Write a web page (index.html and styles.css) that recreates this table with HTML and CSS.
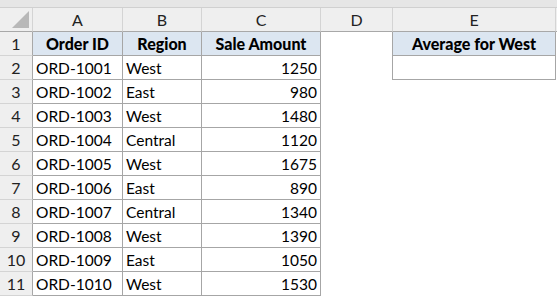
FILE: index.html
```html
<!DOCTYPE html>
<html>
<head>
<meta charset="utf-8">
<link rel="stylesheet" href="styles.css">
</head>
<body>
<div class="sheet">
  <div class="strip"></div>
  <div class="grid">
    <div class="ch corner"><span class="tri"></span></div>
    <div class="ch">A</div>
    <div class="ch">B</div>
    <div class="ch">C</div>
    <div class="ch">D</div>
    <div class="ch">E</div>
    <div class="ch fill"></div>

    <div class="rh">1</div>
    <div class="c hd">Order ID</div>
    <div class="c hd">Region</div>
    <div class="c hd">Sale Amount</div>
    <div class="e"></div>
    <div class="c hd el">Average for West</div>
    <div class="e"></div>

    <div class="rh">2</div>
    <div class="c">ORD-1001</div><div class="c">West</div><div class="c n">1250</div>
    <div class="e"></div><div class="c el"></div><div class="e"></div>

    <div class="rh">3</div>
    <div class="c">ORD-1002</div><div class="c">East</div><div class="c n">980</div>
    <div class="e"></div><div class="e"></div><div class="e"></div>

    <div class="rh">4</div>
    <div class="c">ORD-1003</div><div class="c">West</div><div class="c n">1480</div>
    <div class="e"></div><div class="e"></div><div class="e"></div>

    <div class="rh">5</div>
    <div class="c">ORD-1004</div><div class="c">Central</div><div class="c n">1120</div>
    <div class="e"></div><div class="e"></div><div class="e"></div>

    <div class="rh">6</div>
    <div class="c">ORD-1005</div><div class="c">West</div><div class="c n">1675</div>
    <div class="e"></div><div class="e"></div><div class="e"></div>

    <div class="rh">7</div>
    <div class="c">ORD-1006</div><div class="c">East</div><div class="c n">890</div>
    <div class="e"></div><div class="e"></div><div class="e"></div>

    <div class="rh">8</div>
    <div class="c">ORD-1007</div><div class="c">Central</div><div class="c n">1340</div>
    <div class="e"></div><div class="e"></div><div class="e"></div>

    <div class="rh">9</div>
    <div class="c">ORD-1008</div><div class="c">West</div><div class="c n">1390</div>
    <div class="e"></div><div class="e"></div><div class="e"></div>

    <div class="rh">10</div>
    <div class="c">ORD-1009</div><div class="c">East</div><div class="c n">1050</div>
    <div class="e"></div><div class="e"></div><div class="e"></div>

    <div class="rh">11</div>
    <div class="c">ORD-1010</div><div class="c">West</div><div class="c n">1530</div>
    <div class="e"></div><div class="e"></div><div class="e"></div>
  </div>
</div>
</body>
</html>
```

FILE: styles.css
```css
* { box-sizing: border-box; }
html, body { margin: 0; padding: 0; background: #ffffff; }
body {
  font-family: Lato, "Open Sans", sans-serif;
  font-size: 15.5px;
  color: #000;
}
.sheet { width: 557px; height: 297px; overflow: hidden; }
.strip {
  height: 8px;
  background: #e6e6e6;
  border-bottom: 1px solid #d0d0d0;
}
.grid {
  display: grid;
  grid-template-columns: 33px 90px 79px 119px 72px 163px 1fr;
  grid-auto-rows: 24px;
}
.ch {
  background: #efefef;
  border-right: 1px solid #d4d4d4;
  border-bottom: 1px solid #a8a8a8;
  display: flex;
  align-items: center;
  justify-content: center;
  color: #222;
  font-size: 16px;
}
.ch.fill { border-right: none; }
.corner { position: relative; }
.tri {
  position: absolute;
  right: 3px;
  bottom: 3px;
  width: 0;
  height: 0;
  border-left: 17px solid transparent;
  border-bottom: 17px solid #b8b8b8;
}
.rh {
  background: #efefef;
  border-right: 1px solid #a8a8a8;
  border-bottom: 1px solid #d4d4d4;
  display: flex;
  align-items: center;
  justify-content: center;
  color: #222;
  font-size: 16px;
}
.c {
  border-right: 1px solid #a6a6a6;
  border-bottom: 1px solid #a6a6a6;
  display: flex;
  align-items: center;
  padding: 0 3px;
  white-space: nowrap;
}
.c.n { justify-content: flex-end; }
.c.hd {
  background: #dce6f1;
  font-weight: 900;
  font-size: 16px;
  justify-content: center;
}
.c.el { border-left: 1px solid #a6a6a6; margin-left: -1px; }
.e { }
```
